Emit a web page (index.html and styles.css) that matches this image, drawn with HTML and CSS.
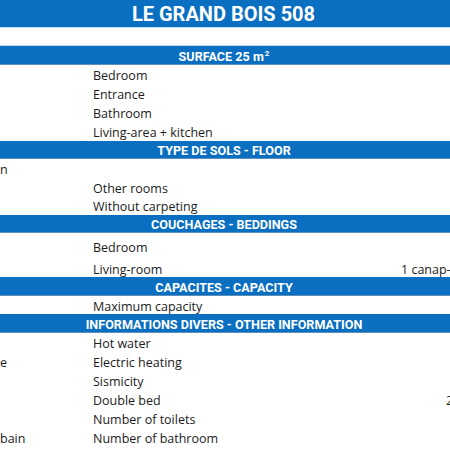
FILE: index.html
```html
<!DOCTYPE html>
<html>
<head>
<meta charset="utf-8">
<link rel="stylesheet" href="styles.css">
</head>
<body>
<div class="sheet">
  <div class="title">LE GRAND BOIS 508</div>
  <div class="spacer"></div>

  <div class="band h19">SURFACE 25 m<sup>2</sup></div>
  <div class="row h19"><span class="a"></span><span class="b">Bedroom</span><span class="c"></span></div>
  <div class="row h19"><span class="a"></span><span class="b">Entrance</span><span class="c"></span></div>
  <div class="row h19"><span class="a"></span><span class="b">Bathroom</span><span class="c"></span></div>
  <div class="row h19"><span class="a"></span><span class="b">Living-area + kitchen</span><span class="c"></span></div>

  <div class="band h18">TYPE DE SOLS - FLOOR</div>
  <div class="row h19"><span class="a">n</span><span class="b"></span><span class="c"></span></div>
  <div class="row h18"><span class="a"></span><span class="b">Other rooms</span><span class="c"></span></div>
  <div class="row h19"><span class="a"></span><span class="b">Without carpeting</span><span class="c"></span></div>

  <div class="band h18">COUCHAGES - BEDDINGS</div>
  <div class="row h22"><span class="a"></span><span class="b">Bedroom</span><span class="c"></span></div>
  <div class="row h22"><span class="a"></span><span class="b">Living-room</span><span class="c">1 canap-lit</span></div>

  <div class="band h19">CAPACITES - CAPACITY</div>
  <div class="row h18"><span class="a"></span><span class="b">Maximum capacity</span><span class="c"></span></div>

  <div class="band h19">INFORMATIONS DIVERS - OTHER INFORMATION</div>
  <div class="row h19"><span class="a"></span><span class="b">Hot water</span><span class="c"></span></div>
  <div class="row h19"><span class="a">e</span><span class="b">Electric heating</span><span class="c"></span></div>
  <div class="row h19"><span class="a"></span><span class="b">Sismicity</span><span class="c"></span></div>
  <div class="row h19"><span class="a"></span><span class="b">Double bed</span><span class="c far">2</span></div>
  <div class="row h19"><span class="a"></span><span class="b">Number of toilets</span><span class="c"></span></div>
  <div class="row h19"><span class="a">bain</span><span class="b">Number of bathroom</span><span class="c"></span></div>
</div>
</body>
</html>
```

FILE: styles.css
```css
html, body {
  margin: 0;
  padding: 0;
  background: #ffffff;
}

.sheet {
  width: 450px;
  height: 450px;
  overflow: hidden;
  font-family: "Open Sans", "Liberation Sans", sans-serif;
  font-size: 12.5px;
  color: #1c1c1c;
}

.title {
  height: 28px;
  background: #0a6fc1;
  color: #ffffff;
  font-family: Roboto, "Liberation Sans", sans-serif;
  font-weight: 700;
  font-size: 20px;
  display: flex;
  align-items: center;
  justify-content: center;
  border-bottom: 1px solid #b9ddf3;
  box-sizing: border-box;
  padding-right: 3px;
}

.spacer {
  height: 18px;
  border-bottom: 1px solid #b9ddf3;
  box-sizing: border-box;
}

.band {
  background: #0a6fc1;
  color: #ffffff;
  font-family: Roboto, "Liberation Sans", sans-serif;
  font-weight: 700;
  font-size: 12.6px;
  display: flex;
  align-items: center;
  justify-content: center;
  box-sizing: border-box;
  border-bottom: 1px solid #5d8fb8;
  padding-top: 2px;
  padding-right: 2px;
}

.band sup {
  font-size: 8px;
  line-height: 0;
  position: relative;
  top: -2px;
  margin-left: 1px;
}

.row {
  display: grid;
  grid-template-columns: 93px 308px 1fr;
  align-items: center;
  white-space: nowrap;
  box-sizing: border-box;
  padding-top: 2px;
}

.row span {
  overflow: hidden;
}

.c.far {
  padding-left: 45px;
}

.h18 { height: 18px; }
.h19 { height: 19px; }
.h22 { height: 22px; padding-top: 6px; }
```
